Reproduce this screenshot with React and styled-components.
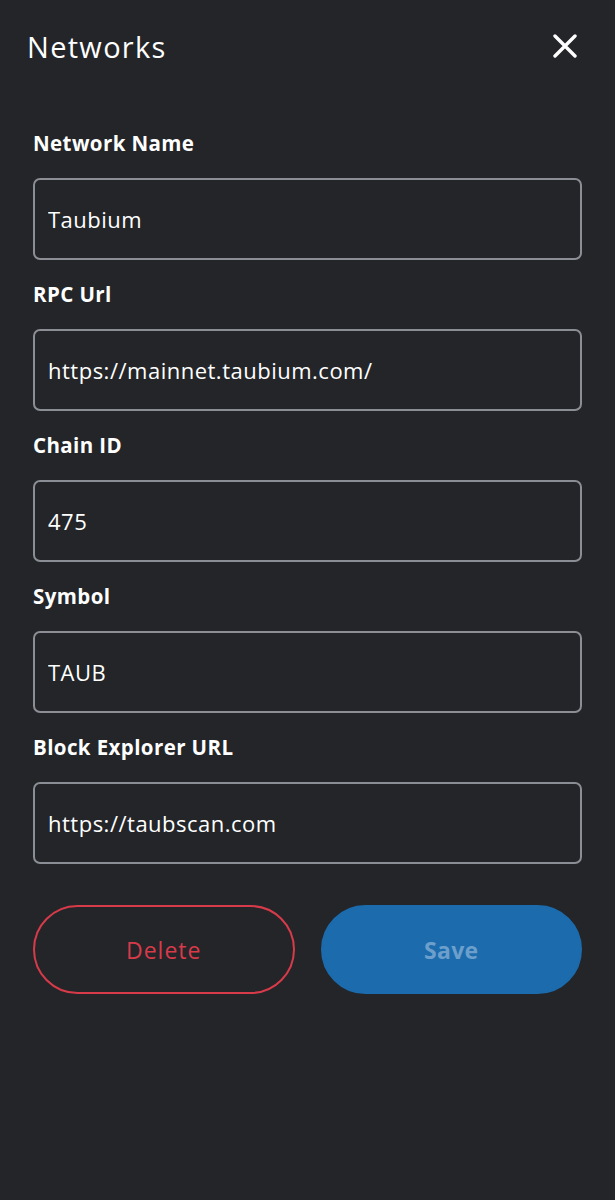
import React from 'react';
import styled, { createGlobalStyle } from 'styled-components';

const GlobalStyle = createGlobalStyle`
  html, body {
    margin: 0;
    padding: 0;
    background: #232529;
  }
  body {
    font-family: "Open Sans", Lato, sans-serif;
    -webkit-font-smoothing: antialiased;
  }
`;

const Page = styled.div`
  min-height: 1200px;
  background: #232529;
  color: #ffffff;
  box-sizing: border-box;
  padding: 27px 33px 0 27px;
`;

const Header = styled.header`
  display: flex;
  align-items: center;
  justify-content: space-between;
  height: 38px;
`;

const Title = styled.h1`
  margin: 0;
  font-size: 29px;
  font-weight: 400;
  letter-spacing: 1.3px;
  color: #ffffff;
`;

const CloseButton = styled.button`
  display: flex;
  align-items: center;
  justify-content: center;
  width: 28px;
  height: 28px;
  padding: 0;
  margin-right: 3px;
  border: none;
  background: none;
  color: #ffffff;
  cursor: pointer;
`;

const Form = styled.form`
  display: flex;
  flex-direction: column;
  margin-top: 66px;
  padding-left: 6px;
`;

const Field = styled.div`
  display: flex;
  flex-direction: column;
  gap: 23px;
  margin-bottom: 22px;
`;

const Label = styled.label`
  font-size: 20.5px;
  font-weight: 700;
  line-height: 24px;
  letter-spacing: 0.4px;
  color: #ffffff;
`;

const Input = styled.input`
  box-sizing: border-box;
  width: 100%;
  height: 82px;
  padding: 0 13px;
  border: 2px solid #8b8e94;
  border-radius: 7px;
  background: transparent;
  color: #ffffff;
  font-family: inherit;
  font-size: 22px;
  letter-spacing: 0.5px;
  outline: none;
`;

const Actions = styled.div`
  display: grid;
  grid-template-columns: 1fr 1fr;
  gap: 26px;
  margin-top: 19px;
`;

const PillButton = styled.button`
  height: 89px;
  border-radius: 45px;
  font-family: inherit;
  font-size: 23px;
  letter-spacing: ${p => (p.$danger ? '1px' : '0.3px')};
  cursor: pointer;
  border: 2px solid ${p => (p.$danger ? '#d73a49' : '#1b6bad')};
  background: ${p => (p.$danger ? 'transparent' : '#1b6bad')};
  color: ${p => (p.$danger ? '#d73a49' : '#6c9fcb')};
  font-weight: ${p => (p.$danger ? 400 : 700)};
`;

const fields = [
  { label: 'Network Name', value: 'Taubium' },
  { label: 'RPC Url', value: 'https://mainnet.taubium.com/' },
  { label: 'Chain ID', value: '475' },
  { label: 'Symbol', value: 'TAUB' },
  { label: 'Block Explorer URL', value: 'https://taubscan.com' }
];

const App = () => (
  <Page>
    <GlobalStyle />
    <Header>
      <Title>Networks</Title>
      <CloseButton aria-label="Close">
        <svg width="24" height="24" viewBox="0 0 24 24">
          <path
            d="M2 2 L22 22 M22 2 L2 22"
            stroke="currentColor"
            strokeWidth="3.4"
            strokeLinecap="round"
          />
        </svg>
      </CloseButton>
    </Header>
    <Form onSubmit={e => e.preventDefault()}>
      {fields.map(f => (
        <Field key={f.label}>
          <Label>{f.label}</Label>
          <Input defaultValue={f.value} />
        </Field>
      ))}
      <Actions>
        <PillButton type="button" $danger>
          Delete
        </PillButton>
        <PillButton type="submit">Save</PillButton>
      </Actions>
    </Form>
  </Page>
);

export default App;
